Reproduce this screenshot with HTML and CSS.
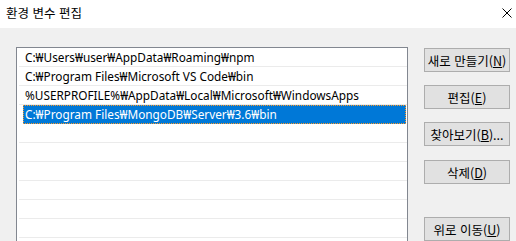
FILE: index.html
```html
<!DOCTYPE html>
<html lang="ko">
<head>
  <meta charset="UTF-8">
  <title>환경 변수 편집</title>
  <link rel="stylesheet" href="styles.css">
</head>
<body>

  <div class="title-bar">
    <span class="title">환경 변수 편집</span>
    <svg class="close" width="10" height="10" viewBox="0 0 10 10">
      <path d="M0.5 0.5 L9.5 9.5 M9.5 0.5 L0.5 9.5" stroke="#000" stroke-width="1" fill="none"/>
    </svg>
  </div>

  <div class="content">
    <div class="path-list">
      <div class="row">C:₩Users₩user₩AppData₩Roaming₩npm</div>
      <div class="row">C:₩Program Files₩Microsoft VS Code₩bin</div>
      <div class="row">%USERPROFILE%₩AppData₩Local₩Microsoft₩WindowsApps</div>
      <div class="row selected">C:₩Program Files₩MongoDB₩Server₩3.6₩bin</div>
      <div class="row"></div>
      <div class="row"></div>
      <div class="row"></div>
      <div class="row"></div>
      <div class="row"></div>
      <div class="row"></div>
    </div>

    <div class="actions">
      <button class="btn">새로 만들기(<u>N</u>)</button>
      <button class="btn">편집(<u>E</u>)</button>
      <button class="btn">찾아보기(<u>B</u>)...</button>
      <button class="btn btn-delete">삭제(<u>D</u>)</button>
      <button class="btn btn-up">위로 이동(<u>U</u>)</button>
    </div>
  </div>

</body>
</html>
```

FILE: styles.css
```css
body {
  margin: 0;
  width: 516px;
  height: 241px;
  overflow: hidden;
  background: #f0f0f0;
  font-family: "Noto Sans CJK KR", sans-serif;
  font-size: 12px;
  color: #000;
}

.title-bar {
  height: 28px;
  background: #fff;
  display: flex;
  align-items: center;
  justify-content: space-between;
  padding: 0 4px 0 6px;
}

.title {
  font-size: 12.5px;
  margin-top: -3px;
}

.close {
  margin-top: -3px;
}

.content {
  display: flex;
  gap: 16px;
  padding: 19px 0 0 16px;
}

.path-list {
  width: 389px;
  height: 194px;
  border: 1px solid #828790;
  border-bottom: none;
  background: #fff;
  padding-left: 1px;
  font-family: "Noto Sans", "Noto Sans CJK KR", sans-serif;
  font-size: 11.8px;
}

.row {
  height: 18px;
  line-height: 18px;
  border-bottom: 1px solid #ebebeb;
  margin-left: 1px;
  padding-left: 6px;
  white-space: nowrap;
  overflow: hidden;
}

.row.selected {
  margin-left: 5px;
  margin-right: 1px;
  padding-left: 1px;
  background: #0078d7;
  color: #fff;
  border: 1px dotted #ff9a28;
  height: 17px;
  line-height: 17px;
}

.actions {
  display: flex;
  flex-direction: column;
  padding-top: 1px;
}

.btn {
  width: 86px;
  height: 24px;
  margin-bottom: 13px;
  padding: 0;
  background: #e1e1e1;
  border: 1px solid #adadad;
  font-family: "Noto Sans CJK KR", sans-serif;
  font-size: 12.5px;
  color: #000;
}

.btn-delete {
  margin-top: 1px;
  margin-bottom: 33px;
}

.btn-up {
  margin-bottom: 0;
}
```
